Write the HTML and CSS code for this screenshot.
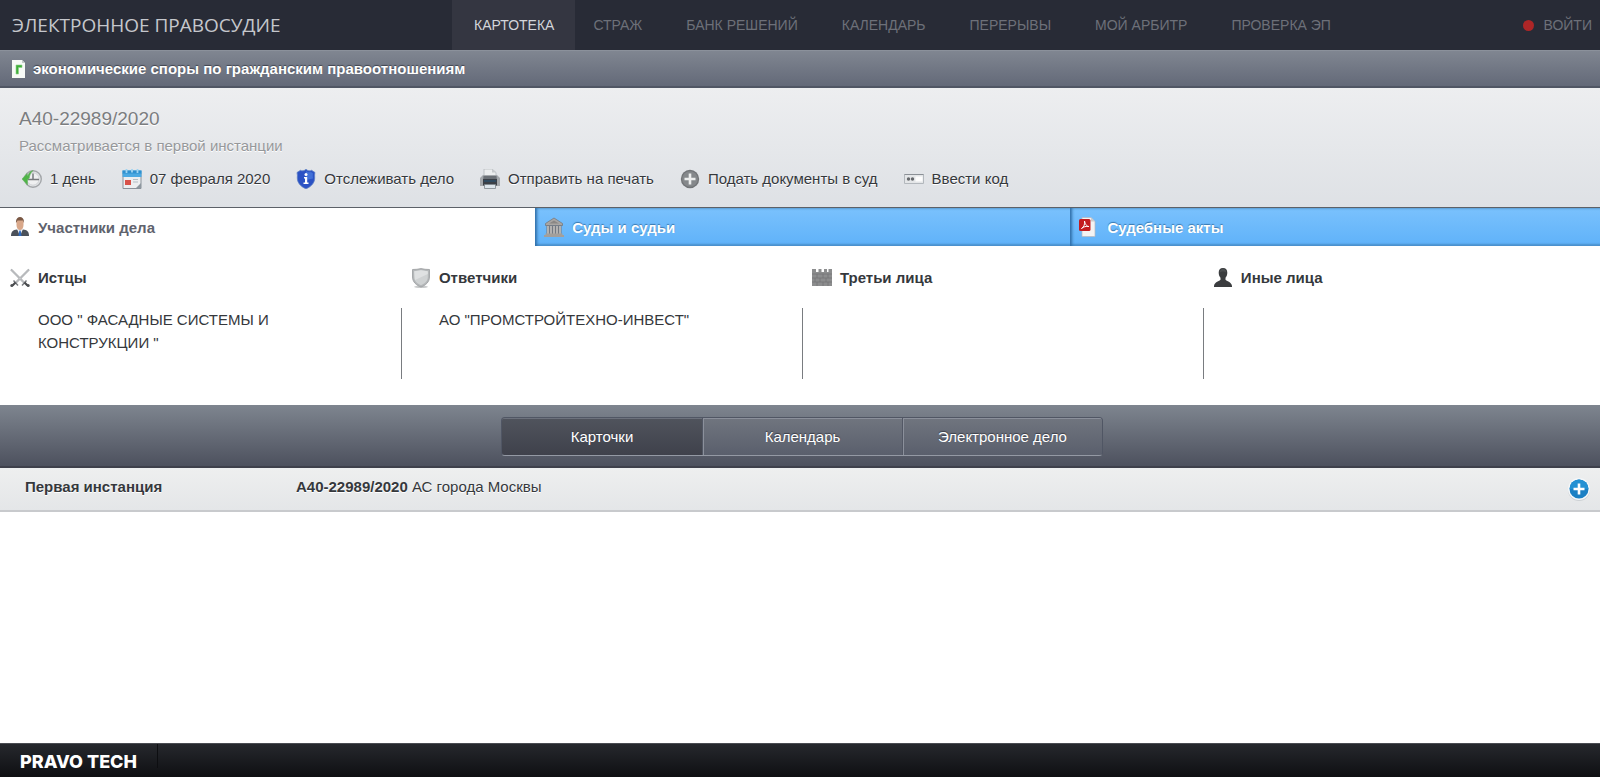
FILE: index.html
```html
<!DOCTYPE html>
<html lang="ru">
<head>
<meta charset="utf-8">
<meta name="viewport" content="width=device-width, initial-scale=1">
<title>А40-22989/2020 — Электронное правосудие</title>
<link rel="stylesheet" href="styles.css">
</head>
<body>
<header class="header">
  <a class="brand" href="#">ЭЛЕКТРОННОЕ ПРАВОСУДИЕ</a>
  <nav class="nav">
    <a class="nav-link nav-link-active" href="#">КАРТОТЕКА</a>
    <a class="nav-link" href="#">СТРАЖ</a>
    <a class="nav-link" href="#">БАНК РЕШЕНИЙ</a>
    <a class="nav-link" href="#">КАЛЕНДАРЬ</a>
    <a class="nav-link" href="#">ПЕРЕРЫВЫ</a>
    <a class="nav-link" href="#">МОЙ АРБИТР</a>
    <a class="nav-link" href="#">ПРОВЕРКА ЭП</a>
  </nav>
  <a class="login" href="#"><span class="login-dot"></span>ВОЙТИ</a>
</header>

<main class="main">
  <div class="category">
    <svg class="category-icon" width="13" height="18" viewBox="0 0 13 18">
      <path d="M0 0h10l3 3v15H0z" fill="#f7faf7"/><path d="M10 0v3h3z" fill="#c3cbc8"/>
      <path d="M4 14V5h6v2.500H6.500V14z" fill="#3fae3a" stroke="#8fd08a" stroke-width=".6"/>
    </svg>
    <h2 class="category-title">экономические споры по гражданским правоотношениям</h2>
  </div>

  <section class="summary">
    <h1 class="case-number">А40-22989/2020</h1>
    <p class="case-state">Рассматривается в первой инстанции</p>
    <div class="tools">
      <span class="tool">
        <svg width="20" height="20" viewBox="0 0 20 20">
          <circle cx="11" cy="10" r="8.300" fill="#e3e5e7" stroke="#a3a6a9" stroke-width="1.400"/>
          <circle cx="11" cy="10" r="6.200" fill="#eff0f1" stroke="#c9cccf" stroke-width=".8"/>
          <path d="M11 4.500V10.500H17M11 10.500H6" fill="none" stroke="#77797d" stroke-width="1.500"/>
          <path d="M0 10l5-5.500.8 2.200C7 3.500 9 2 11 1.600 8.500 4 7.500 6.500 7.300 9L5.500 11v5z" fill="#4fb548" stroke="#6cae68" stroke-width=".6"/>
        </svg>
        1 день
      </span>
      <span class="tool">
        <svg width="20" height="20" viewBox="0 0 20 20">
          <path d="M1 4h18v15.500H1z" fill="#eceef0" stroke="#8a929a"/>
          <path d="M.5 1.500h19V8H.5z" fill="#4ba9e2"/><path d="M.5 1.500h19v3H.5z" fill="#2f90cf"/>
          <path d="M4.500 0v4M10 0v3.500M15.500 0v4" stroke="#9fd4f2" stroke-width="1.800"/>
          <path d="M3 11h6v5H3z" fill="#d8524a"/><path d="M11 10.500h5M11 13h5" stroke="#b3bdc5"/>
          <path d="M14 19l5-5v5z" fill="#8d979f"/>
        </svg>
        07 февраля 2020
      </span>
      <button class="tool" type="button">
        <svg width="20" height="20" viewBox="0 0 20 20">
          <path d="M10 .3c2 1.700 4 2 5.500 1L19 3.500c-.6 2-.3 3.500-.3 5.500C18.700 14 15 17.800 10 19.800 5 17.800 1.300 14 1.300 9c0-2 .3-3.500-.3-5.500l3.500-2.200c1.500 1 3.500.7 5.500-1z" fill="#2b52c4" stroke="#5d7fc4" stroke-width=".8"/>
          <path d="M10 2c2 1.300 3.400 1.500 5 1l2 1.500c-.6 2 0 4 0 5L10 11z" fill="#4d7ee0" opacity=".7"/>
          <circle cx="10" cy="5.400" r="1.500" fill="#fff"/><path d="M8 8h3.200v5.500H12.500V15h-5v-1.500H9V9.500H8z" fill="#fff"/>
        </svg>
        Отслеживать дело
      </button>
      <button class="tool" type="button">
        <svg width="20" height="20" viewBox="0 0 20 20">
          <path d="M4 0h8l4 3.500V8H4z" fill="#eceeef" stroke="#b4b8bc" stroke-width=".8"/>
          <path d="M12 0v3.500h4z" fill="#c6c9cc"/>
          <path d="M0 17V9l3-3h14l3 3v8z" fill="#a4a8ac"/>
          <path d="M3.500 7h13l.5 5H3z" fill="#6b7076"/><path d="M3 10h14v6.500H3z" fill="#3b4047"/>
          <path d="M4 11h12v2H4z" fill="#2f4a60"/>
          <path d="M4.500 15.500h11v4h-11z" fill="#dce5ec" stroke="#7e868d" stroke-width=".8"/>
        </svg>
        Отправить на печать
      </button>
      <button class="tool" type="button">
        <svg width="20" height="20" viewBox="0 0 20 20">
          <circle cx="10" cy="10" r="9.200" fill="#727578"/><circle cx="10" cy="10" r="7.800" fill="#85888b"/>
          <path d="M10 4.500v11M4.500 10h11" stroke="#eceded" stroke-width="2.600"/>
        </svg>
        Подать документы в суд
      </button>
      <button class="tool" type="button">
        <svg width="20" height="20" viewBox="0 0 20 20">
          <path d="M.5 5.500h19v9H.5z" fill="#e4e6e8" stroke="#b3b8bd"/><path d="M.5 5.500h19" stroke="#8b9096"/>
          <circle cx="4.500" cy="10" r="1.700" fill="#66696d"/><circle cx="8.500" cy="10" r="1.700" fill="#66696d"/>
          <path d="M11.500 7.500h7v5h-7z" fill="#fdfdfd"/>
        </svg>
        Ввести код
      </button>
    </div>
  </section>

  <div class="tabs" role="tablist">
    <button class="tab tab-active" type="button" role="tab" aria-selected="true">
      <svg width="20" height="20" viewBox="0 0 20 20">
        <path d="M1 19c0-4.500 2-6 6-6.500h6c4 .5 6 2 6 6.500z" fill="#4b515a"/>
        <path d="M7 12l3 7 3-7z" fill="#eef1f5"/><path d="M9.300 13.500h1.400l.8 5.500h-3z" fill="#2f6bc0"/>
        <path d="M6.500 4.500C6.500 1 13.500 1 13.500 4.500V8c0 3-1.500 5-3.500 5S6.500 11 6.500 8z" fill="#d9a88a"/>
        <path d="M6 6c-.8-8 8.800-8 8 0l-1-2.500H7.500z" fill="#7a5844"/>
      </svg>
      Участники дела
    </button>
    <button class="tab" type="button" role="tab" aria-selected="false">
      <svg width="20" height="20" viewBox="0 0 20 20">
        <path d="M10 1l8.500 5.500v2h-17v-2z" fill="#a9a6a3" stroke="#77787c" stroke-width=".8"/>
        <path d="M5 6.500L10 3.500l5 3z" fill="#8a8785"/>
        <path d="M2.500 8.500h15V17h-15z" fill="#737982"/>
        <path d="M4 9v8M7 9v8M13 9v8M16 9v8M10 9v8" stroke="#c9c5c1" stroke-width="1.500"/>
        <path d="M1.500 16.500h17v1.500H20v2H0v-2h1.500z" fill="#a39f9b"/>
      </svg>
      Суды и судьи
    </button>
    <button class="tab" type="button" role="tab" aria-selected="false">
      <svg width="20" height="20" viewBox="0 0 20 20">
        <path d="M3 .5h9l4 4V19.500H3z" fill="#f4f3f3" stroke="#b7b8bd" stroke-width=".7"/><path d="M12 .5v4h4z" fill="#ccc"/>
        <rect x="0" y="2" width="11.500" height="12" rx="1.500" fill="#c31c1f"/>
        <path d="M2.500 11.500C5 10 6 7 5.500 4c1 4 2.500 5.500 4.500 5.500-3-.5-5.500.3-7.500 2z" fill="none" stroke="#fff" stroke-width="1"/>
      </svg>
      Судебные акты
    </button>
  </div>

  <section class="parties">
    <div class="party">
      <h3 class="party-title">
        <svg width="20" height="20" viewBox="0 0 20 20">
          <path d="M1 1.500l13 13M19 1.500l-13 13" stroke="#9da0a3" stroke-width="2"/>
          <path d="M1 1.500l13 13M19 1.500l-13 13" stroke="#dfe1e3" stroke-width=".8"/>
          <path d="M3.500 12.500l4.500 5M16.500 12.500l-4.500 5" stroke="#777a7e" stroke-width="1.500"/>
          <path d="M5.500 14.500L2.500 17.500M14.500 14.500L17.500 17.500" stroke="#4a4c4f" stroke-width="2.200"/>
          <circle cx="1.800" cy="17.500" r="1.500" fill="#4c4f52"/><circle cx="18.200" cy="17.500" r="1.500" fill="#4c4f52"/>
        </svg>
        Истцы
      </h3>
      <ul class="party-list"><li>ООО " ФАСАДНЫЕ СИСТЕМЫ И КОНСТРУКЦИИ "</li></ul>
    </div>
    <div class="party">
      <h3 class="party-title">
        <svg width="20" height="20" viewBox="0 0 20 20">
          <ellipse cx="10" cy="18.800" rx="7" ry="1.200" fill="#c9cbcc"/>
          <path d="M1.500 1.500Q6 1.500 10 .6 14 1.500 18.500 1.500V9c0 5-4 8.500-8.500 10C5.500 17.500 1.500 14 1.500 9z" fill="#b4b7b9" stroke="#999c9e" stroke-width=".8"/>
          <path d="M3.200 3.200Q7 3 10 2.300 13 3 16.800 3.200V9c0 4-3 6.700-6.800 8.200C6.200 15.700 3.200 13 3.200 9z" fill="#cfd2d3"/>
          <path d="M3.200 3.200Q7 3 10 2.300 13 3 16.800 3.200V6L4 12z" fill="#dfe1e2"/>
        </svg>
        Ответчики
      </h3>
      <ul class="party-list"><li>АО "ПРОМСТРОЙТЕХНО-ИНВЕСТ"</li></ul>
    </div>
    <div class="party">
      <h3 class="party-title">
        <svg width="20" height="20" viewBox="0 0 20 20">
          <path d="M0 1h4v3h2.500V1h3v3H12V1h3v3h1.500V1H20v17H0z" fill="#8c8d8e"/>
          <path d="M0 6h20M0 10h20M0 14h20M5 6v4M11 6v4M16 6v4M3 10v4M8 10v4M14 10v4M5 14v4M11 14v4M16 14v4" stroke="#747577" stroke-width=".8"/>
        </svg>
        Третьи лица
      </h3>
      <ul class="party-list"></ul>
    </div>
    <div class="party">
      <h3 class="party-title">
        <svg width="20" height="20" viewBox="0 0 20 20">
          <path d="M10 0c3 0 4.300 2 4.300 4.800 0 2.200-.8 3.800-1.800 5v2c1 1.200 6 2 6.500 6.200V19H1v-1c.5-4.200 5.500-5 6.500-6.200v-2c-1-1.200-1.800-2.800-1.800-5C5.700 2 7 0 10 0z" fill="#3b3d3f"/>
          <path d="M10 1c2 0 3.200 1.500 3.200 3.500C12 3 8 3 6.800 4.500 6.800 2.500 8 1 10 1z" fill="#4c4f51"/>
        </svg>
        Иные лица
      </h3>
      <ul class="party-list"></ul>
    </div>
  </section>

  <div class="views">
    <div class="segments">
      <button class="segment segment-active" type="button" aria-pressed="true">Карточки</button>
      <button class="segment" type="button" aria-pressed="false">Календарь</button>
      <button class="segment" type="button" aria-pressed="false">Электронное дело</button>
    </div>
  </div>

  <section class="instance">
    <strong class="instance-name">Первая инстанция</strong>
    <div class="instance-case"><strong>А40-22989/2020</strong> АС города Москвы</div>
    <button class="expand" type="button" aria-label="Развернуть">
      <svg width="24" height="24" viewBox="0 0 24 24">
        <circle cx="12" cy="13" r="11" fill="#cdd1d4"/><circle cx="12" cy="12" r="11" fill="#f4f7f9"/>
        <circle cx="12" cy="12" r="9.500" fill="#1b80c4"/><path d="M2.500 12a9.500 9.500 0 0 1 19 0z" fill="#2591d3"/>
        <path d="M12 6.500v11M6.500 12h11" stroke="#fff" stroke-width="2.600"/>
      </svg>
    </button>
  </section>
</main>

<footer class="footer"><a class="footer-brand" href="#">PRAVO TECH</a></footer>
</body>
</html>
```
FILE: styles.css
```css
* {
  box-sizing: border-box;
}

body {
  margin: 0;
  min-height: 100vh;
  display: flex;
  flex-direction: column;
  background: #fff;
  color: #35383c;
  font: 15px/23px "Liberation Sans", Arial, sans-serif;
}

h1, h2, h3, p, ul {
  margin: 0;
  padding: 0;
}

ul {
  list-style: none;
}

a {
  color: inherit;
  text-decoration: none;
}

button {
  margin: 0;
  padding: 0;
  border: 0;
  background: none;
  color: inherit;
  font: inherit;
  cursor: pointer;
}

svg {
  display: block;
  flex: none;
}

.header {
  display: flex;
  height: 50px;
  background: #282b36;
  color: #6d7079;
  font-size: 14px;
  line-height: 50px;
}

.brand {
  width: 452px;
  padding-left: 12px;
  color: #c5c7cc;
  font: 19px/50px "Open Sans", "Noto Sans", sans-serif;
  white-space: nowrap;
}

.nav {
  display: flex;
}

.nav-link {
  padding: 0 22px;
  white-space: nowrap;
}

.nav-link-active {
  margin-right: -4px;
  padding: 0 21px 0 22px;
  background: #343641;
  color: #d3d5da;
}

.login {
  display: flex;
  align-items: center;
  gap: 10px;
  margin-left: auto;
  padding-right: 8px;
}

.login-dot {
  width: 11px;
  height: 11px;
  border-radius: 50%;
  background: #ad2627;
}

.main {
  flex: 1;
}

.category {
  display: flex;
  align-items: center;
  gap: 8px;
  height: 38px;
  padding-left: 12px;
  border-top: 1px solid #8b919b;
  border-bottom: 2px solid #505664;
  background: linear-gradient(#808691, #636978);
  color: #fff;
  text-shadow: 0 -1px 1px #40444f;
}

.category-title {
  font-size: 15px;
  line-height: 23px;
}

.summary {
  padding: 19px 21px 17px 19px;
  border-bottom: 1px solid #5c6168;
  background: linear-gradient(#edeef0, #dee1e5);
  text-shadow: 0 1px 0 #fff;
}

.case-number {
  color: #7b7d80;
  font-size: 19px;
  font-weight: normal;
  line-height: 24px;
}

.case-state {
  margin-top: 3px;
  color: #96989b;
}

.tools {
  display: flex;
  flex-wrap: wrap;
  gap: 26px;
  margin-top: 10px;
  padding-left: 3px;
}

.tool {
  display: flex;
  align-items: center;
  gap: 8px;
  text-shadow: inherit;
}

.tabs {
  display: grid;
  grid-template-columns: 33.45% 33.45% 1fr;
}

.tab {
  display: flex;
  align-items: center;
  gap: 8px;
  height: 38px;
  padding: 0 9px;
  background: linear-gradient(#7ac1fd, #5fb2f9);
  box-shadow: inset 5px 0 3px -3px #2f6fa8, inset 0 -4px 2px -2px #4a90cc, inset 0 3px 2px -2px #5a9dd2;
  color: #fff;
  font-weight: bold;
  text-shadow: 0 -1px 1px #3977ae;
}

.tab-active {
  padding-left: 10px;
  background: #fff;
  box-shadow: none;
  color: #5f636e;
  text-shadow: none;
}

.parties {
  display: grid;
  grid-template-columns: 25.06% 25.06% 25.06% 1fr;
  padding: 20px 0 26px;
}

.party {
  display: flex;
  flex-direction: column;
}

.party-title {
  display: flex;
  align-items: center;
  gap: 8px;
  padding-left: 10px;
  font-size: 15px;
  line-height: 23px;
}

.party-list {
  flex: 1;
  min-height: 71px;
  margin-top: 19px;
  padding: 0 100px 0 37px;
  border-left: 1px solid #797c80;
}

.party:first-child .party-list {
  border-left-color: transparent;
}

.views {
  display: flex;
  justify-content: center;
  padding: 12px 0 10px 4px;
  border-bottom: 2px solid #3e404b;
  background: linear-gradient(#7e858f, #4d515e);
}

.segments {
  display: flex;
  border: 1px solid #505664;
  border-bottom-color: #9499a4;
  border-radius: 4px;
  overflow: hidden;
}

.segment {
  width: 200px;
  height: 37px;
  border-left: 1px solid #535865;
  background: linear-gradient(#70757f, #5a5f6c);
  box-shadow: inset 1px 1px 0 #8b909b;
  color: #fff;
  text-shadow: 0 -1px 1px #3a3d47;
}

.segment-active {
  border-left: 0;
  background: linear-gradient(#50545d, #3f414b);
  box-shadow: inset 0 1px 0 #6c717c;
}

.instance {
  display: flex;
  height: 44px;
  padding: 7px 9px 0 25px;
  border-bottom: 2px solid #c8cacd;
  background: linear-gradient(#eeefef, #e4e6e8);
  text-shadow: 0 1px 0 #fff;
}

.instance-name {
  width: 271px;
}

.expand {
  margin: 2px 0 0 auto;
  height: 24px;
}

.footer {
  height: 34px;
  border-top: 1px solid #4a4c52;
  background: linear-gradient(#26282d, #0e0f12);
}

.footer-brand {
  display: block;
  width: 158px;
  height: 24px;
  padding-left: 20px;
  border-right: 1px solid #0d0e11;
  color: #fff;
  font: 800 18px/36px Inter, sans-serif;
}
```
